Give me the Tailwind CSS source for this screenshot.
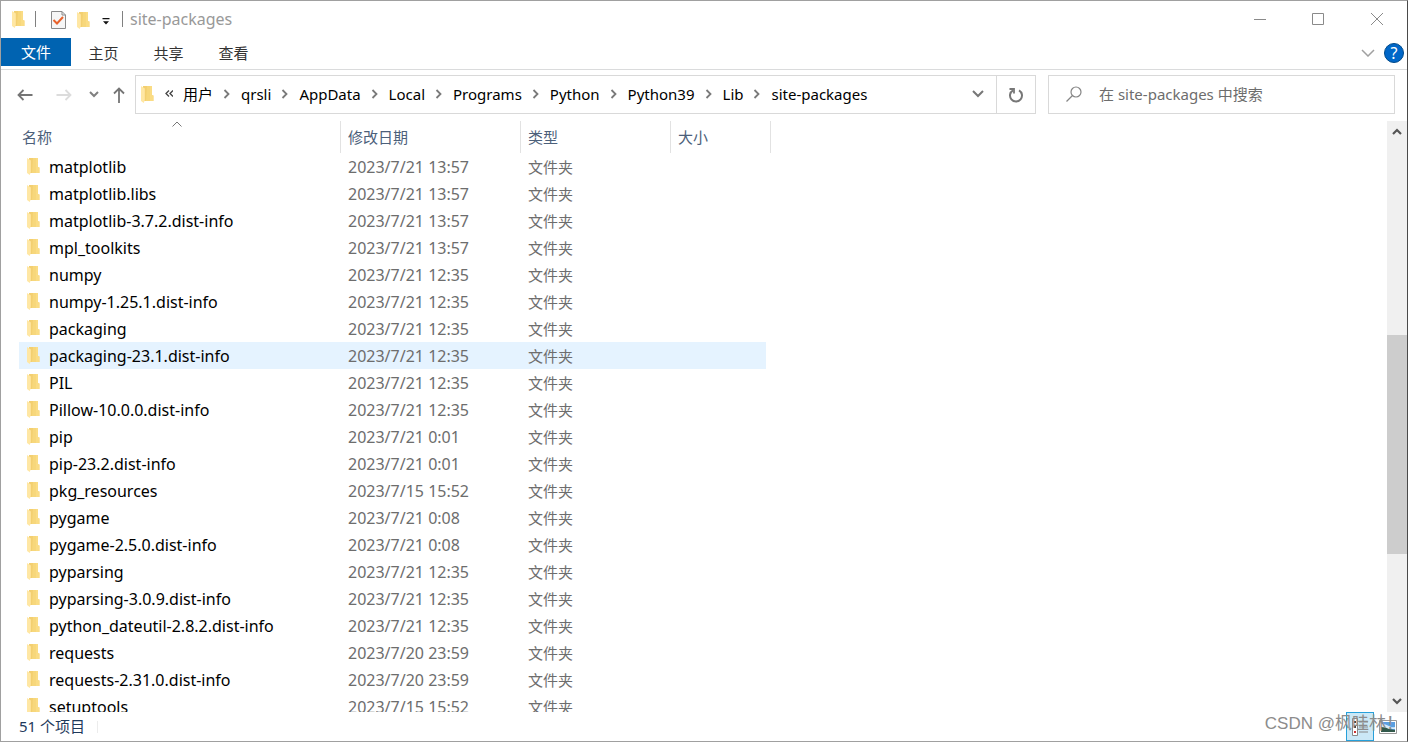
<!DOCTYPE html>
<html lang="zh-CN">
<head>
<meta charset="utf-8">
<title>site-packages</title>
<script src="https://cdn.jsdelivr.net/npm/@tailwindcss/browser@4"></script>
</head>
<body class="h-screen overflow-hidden bg-white font-['Noto_Sans','Noto_Sans_CJK_SC',sans-serif] text-[15px] leading-5 text-black">
<svg class="hidden">
  <symbol id="folder" viewBox="0 0 14 18">
    <path d="M2 0H11V9.500H12.300V15H2Z" fill="#f3cf70"/>
    <path d="M6 0H11V9.500H12.300V15H5Z" fill="#f7d77b"/>
    <path d="M9 0H11V9.500H12.300V15H9Z" fill="#fadc84"/>
    <path d="M0 0L3.800 2.500V14L2.800 17L0 15Z" fill="#ffe7a4"/>
  </symbol>
  <symbol id="chev" viewBox="0 0 8 10"><path d="M1.500 1L5.500 5L1.500 9" fill="none" stroke="#7a7a7a" stroke-width="1.800"/></symbol>
</svg>
<div class="flex h-full flex-col border border-[#a0a0a0] border-r-[#4a4a4a]">
  <header class="flex h-9 shrink-0 items-center">
    <svg class="mt-px ml-[11px] h-[18px] w-[14px]"><use href="#folder"/></svg>
    <span class="ml-[9px] h-4 w-px bg-[#808080]"></span>
    <button class="mt-px ml-[15px]" aria-label="属性">
      <svg class="block" width="15" height="18" viewBox="0 0 15 18"><path d="M.5 .5H11L14.500 4V17.500H.5Z" fill="#f6f6f6" stroke="#8a8a8a"/><path d="M11 .5V4H14.500" fill="none" stroke="#8a8a8a"/><path d="M2.500 9L6 12.500L12 6" fill="none" stroke="#e8622c" stroke-width="2"/></svg>
    </button>
    <button class="mt-[3px] ml-[11px]" aria-label="新建文件夹"><svg class="block h-[18px] w-[14px]"><use href="#folder"/></svg></button>
    <button class="mt-1 ml-[11px]" aria-label="自定义快速访问工具栏"><svg class="block" width="8" height="8" viewBox="0 0 8 8"><path d="M.5 1H7.500V2.200H.5ZM1 4.200H7L4 7.500Z" fill="#111"/></svg></button>
    <span class="ml-[12px] h-4 w-px bg-[#808080]"></span>
    <h1 class="ml-[7px] text-base leading-5 text-[#999]">site-packages</h1>
    <div class="mr-px ml-auto flex items-center">
      <button class="flex w-[58px] justify-center" aria-label="最小化"><svg width="12" height="12"><path d="M0 6.500H12" stroke="#8a8a8a"/></svg></button>
      <button class="flex w-[58px] justify-center" aria-label="最大化"><svg width="12" height="12"><path d="M.5 .5H11.500V11.500H.5Z" fill="none" stroke="#8a8a8a"/></svg></button>
      <button class="flex w-[59px] justify-center" aria-label="关闭"><svg width="12" height="12"><path d="M0 0L12 12M12 0L0 12" stroke="#8a8a8a"/></svg></button>
    </div>
  </header>
  <nav class="mt-px flex h-8 shrink-0 items-start border-b border-[#dadbdc] text-[#333]">
    <button class="h-7 w-[70px] bg-[#0063b1] text-white">文件</button>
    <button class="h-[30px] w-[65px]">主页</button>
    <button class="h-[30px] w-[65px]">共享</button>
    <button class="h-[30px] w-[65px]">查看</button>
    <div class="mr-[3px] ml-auto flex h-[30px] items-center gap-[9px]">
      <button aria-label="展开功能区"><svg class="block" width="14" height="8"><path d="M1 1L7 7L13 1" fill="none" stroke="#a0a0a0" stroke-width="1.500"/></svg></button>
      <button class="size-5 rounded-full border border-[#004a8a] bg-[#0067c8] text-base leading-4 text-white" aria-label="帮助">?</button>
    </div>
  </nav>
  <div class="mt-[5px] flex h-[39px] shrink-0 items-center">
    <div class="flex w-[134px] shrink-0 items-center">
      <button class="ml-[16px]" aria-label="返回"><svg class="block" width="16" height="12"><path d="M6.500 1L1.500 6L6.500 11M1.500 6H15.500" fill="none" stroke="#757575" stroke-width="1.800"/></svg></button>
      <button class="ml-[23px]" aria-label="前进"><svg class="block" width="16" height="12"><path d="M9.500 1L14.500 6L9.500 11M14.500 6H.5" fill="none" stroke="#dcdcdc" stroke-width="1.800"/></svg></button>
      <button class="ml-[17px]" aria-label="最近浏览的位置"><svg class="block" width="10" height="7"><path d="M1 1L5 5L9 1" fill="none" stroke="#808080" stroke-width="2"/></svg></button>
      <button class="ml-[14px]" aria-label="上移"><svg class="block" width="12" height="16"><path d="M1 6.500L6 1.500L11 6.500M6 1.500V16" fill="none" stroke="#757575" stroke-width="1.800"/></svg></button>
    </div>
    <div class="flex h-full flex-1 items-center border border-[#d9d9d9] pb-px">
      <svg class="mt-[2px] ml-[5px] h-[18px] w-[14px] shrink-0"><use href="#folder"/></svg>
      <svg class="ml-[10px] shrink-0" width="8" height="8"><path d="M4 .5L1 3.500L4 6.500M8 .5L5 3.500L8 6.500" fill="none" stroke="#444" stroke-width="1.300"/></svg>
      <ol id="crumbs" class="ml-[10px] flex items-center whitespace-nowrap"></ol>
      <button class="mr-[12px] ml-auto" aria-label="上一个位置"><svg class="block" width="12" height="8"><path d="M1 1L6 6L11 1" fill="none" stroke="#777" stroke-width="2"/></svg></button>
      <button class="-mb-px flex w-[39px] items-center justify-center self-stretch border-l border-[#d9d9d9]" aria-label="刷新"><svg width="16" height="16"><path d="M5 3.300A6 6 0 1 0 11 3.300" fill="none" stroke="#777" stroke-width="2"/><path d="M1.500 2H6V6.500" fill="none" stroke="#777" stroke-width="1.800"/></svg></button>
    </div>
    <label class="mr-[12px] ml-[12px] flex h-full w-[347px] shrink-0 items-center border border-[#d9d9d9] pb-px">
      <svg class="ml-[17px] shrink-0" width="16" height="16"><circle cx="10" cy="6" r="5" fill="none" stroke="#858585" stroke-width="1.200"/><path d="M6.500 9.500L.5 15.500" stroke="#858585" stroke-width="1.200"/></svg>
      <input class="ml-[17px] min-w-0 flex-1 outline-none placeholder:text-[#6d6d6d]" type="text" aria-label="搜索" placeholder="在 site-packages 中搜索">
    </label>
  </div>
  <main class="mt-[7px] flex min-h-0 flex-1">
    <div class="min-w-0 flex-1 overflow-hidden pl-[18px]">
      <table class="w-[752px] table-fixed border-collapse text-left">
        <colgroup><col class="w-[322px]"><col class="w-[180px]"><col class="w-[150px]"><col class="w-[95px]"><col class="w-[5px]"></colgroup>
        <thead class="text-[#4c607a]">
          <tr class="h-8">
            <th class="relative p-0 pl-[3px] font-normal"><span>名称</span><svg class="absolute top-0 left-[153px]" width="10" height="6"><path d="M.5 5.500L5 1L9.500 5.500" fill="none" stroke="#777"/></svg><i class="absolute top-0 right-0 h-8 w-px bg-[#e2e2e2]"></i></th>
            <th class="relative p-0 pl-[7px] font-normal">修改日期<i class="absolute top-0 right-0 h-8 w-px bg-[#e2e2e2]"></i></th>
            <th class="relative p-0 pl-[7px] font-normal">类型<i class="absolute top-0 right-0 h-8 w-px bg-[#e2e2e2]"></i></th>
            <th class="relative p-0 pl-[7px] font-normal" colspan="2">大小<i class="absolute top-0 right-0 h-8 w-px bg-[#e2e2e2]"></i></th>
          </tr>
        </thead>
        <tbody id="files"></tbody>
      </table>
    </div>
    <div class="flex w-5 shrink-0 flex-col items-center bg-[#f0f0f0]" role="scrollbar" aria-controls="files" aria-valuenow="62">
      <button class="mt-[7px]" aria-label="向上滚动"><svg class="block" width="10" height="7"><path d="M1 6L5 2L9 6" fill="none" stroke="#555" stroke-width="2.200"/></svg></button>
      <div class="flex w-full flex-1 flex-col"><span class="grow-[199]"></span><span class="h-[219px] bg-[#cdcdcd]"></span><span class="grow-[144]"></span></div>
      <button class="mb-[7px]" aria-label="向下滚动"><svg class="block" width="10" height="7"><path d="M1 1L5 5L9 1" fill="none" stroke="#555" stroke-width="2.200"/></svg></button>
    </div>
  </main>
  <footer class="relative flex h-[29px] shrink-0 items-center text-[#1e395b]">
    <span class="ml-[18px] pb-0.5">51 个项目</span>
    <span class="ml-[12px] h-3 w-px bg-[#ececec]"></span>
    <button class="ml-auto flex h-[29px] w-7 items-center justify-center border border-[#26a0da] bg-[#cbe8f6]" aria-label="详细信息">
      <svg width="18" height="18"><path d="M1.500 .5H6.500V17.500H1.500Z" fill="#fff" stroke="#888"/><path d="M3 3H5V5H3ZM3 8H5V10H3Z" fill="#444"/><path d="M3 13H5V15H3Z" fill="#c33"/><path d="M8 4H17M8 9H17M8 14H17" stroke="#888"/></svg>
    </button>
    <button class="mr-[10px] ml-[5px]" aria-label="大缩略图">
      <svg class="block" width="18" height="14"><path d="M.5 .5H17.500V13.500H.5Z" fill="#fff" stroke="#999"/><path d="M2 2H16V12H2Z" fill="#5b9fe0"/><path d="M2 4Q7 4 10 6T16 7V9H2Z" fill="#d9ecf8"/><path d="M2 7Q7 7 10 9L16 10V12H2Z" fill="#31594b"/></svg>
    </button>
    <span class="pointer-events-none absolute top-0 right-[4px] font-['Liberation_Sans','Noto_Sans_CJK_SC',sans-serif] text-[17px] leading-6 whitespace-pre text-[#8c8c8c]">CSDN @枫哇林！</span>
  </footer>
</div>
<script>
const crumbs = ['用户', 'qrsli', 'AppData', 'Local', 'Programs', 'Python', 'Python39', 'Lib', 'site-packages'];
document.getElementById('crumbs').innerHTML = crumbs.map((c, i) =>
  `<li class="flex items-center">${i ? '<svg class="mr-[10px] ml-[10px] h-[10px] w-2"><use href="#chev"/></svg>' : ''}<a href="#">${c}</a></li>`).join('');

const files = [
  ['matplotlib', '2023/7/21 13:57'], ['matplotlib.libs', '2023/7/21 13:57'],
  ['matplotlib-3.7.2.dist-info', '2023/7/21 13:57'], ['mpl_toolkits', '2023/7/21 13:57'],
  ['numpy', '2023/7/21 12:35'], ['numpy-1.25.1.dist-info', '2023/7/21 12:35'],
  ['packaging', '2023/7/21 12:35'], ['packaging-23.1.dist-info', '2023/7/21 12:35'],
  ['PIL', '2023/7/21 12:35'], ['Pillow-10.0.0.dist-info', '2023/7/21 12:35'],
  ['pip', '2023/7/21 0:01'], ['pip-23.2.dist-info', '2023/7/21 0:01'],
  ['pkg_resources', '2023/7/15 15:52'], ['pygame', '2023/7/21 0:08'],
  ['pygame-2.5.0.dist-info', '2023/7/21 0:08'], ['pyparsing', '2023/7/21 12:35'],
  ['pyparsing-3.0.9.dist-info', '2023/7/21 12:35'], ['python_dateutil-2.8.2.dist-info', '2023/7/21 12:35'],
  ['requests', '2023/7/20 23:59'], ['requests-2.31.0.dist-info', '2023/7/20 23:59'],
  ['setuptools', '2023/7/15 15:52']
];
document.getElementById('files').innerHTML = files.map(([name, date], i) => {
  const bg = i === 7 ? 'bg-[#e5f3ff]' : '';
  return `<tr class="h-[27px] text-[#6d6d6d]">
    <td class="p-0 ${bg}"><div class="flex items-center pl-2 text-base leading-5 text-black"><svg class="mr-2 h-[18px] w-[14px]"><use href="#folder"/></svg>${name}</div></td>
    <td class="p-0 pl-[7px] text-base leading-5 ${bg}">${date}</td><td class="p-0 pl-[7px] ${bg}">文件夹</td><td class="p-0 ${bg}"></td><td class="p-0"></td></tr>`;
}).join('');
</script>
</body>
</html>
